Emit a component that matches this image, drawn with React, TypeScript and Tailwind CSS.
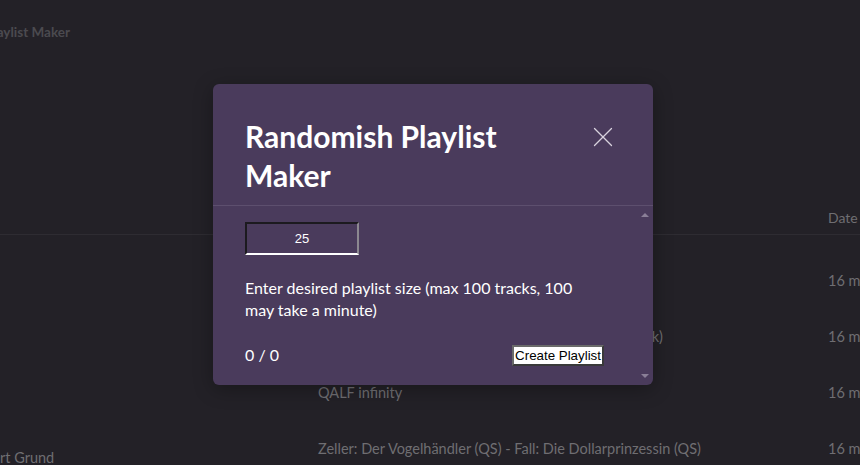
import { X } from "lucide-react";

// rows of the dimmed page behind the modal
const rows = [
  { title: "", date: "16 mi" },
  { title: "Tiefschwarz - Original Mix Remastered (Black Deck)", date: "16 mi" },
  { title: "QALF infinity", date: "16 mi" },
  { title: "Zeller: Der Vogelhändler (QS) - Fall: Die Dollarprinzessin (QS)", date: "16 mi", sub: "rt Grund" },
];

function Background() {
  return (
    <div className="flex h-full w-full flex-col overflow-hidden bg-[#232127] font-['Lato',sans-serif] text-[#6f6e72]">
      <div className="h-[20px] shrink-0" />
      <div className="shrink-0 overflow-hidden">
        <div className="-ml-[85px] whitespace-nowrap text-[13.5px] font-bold leading-[24px] text-[#4b4a4f]">
          Randomish Playlist Maker
        </div>
      </div>
      <div className="h-[156px] shrink-0" />
      <div className="flex h-[35px] shrink-0 items-center border-b border-[#2e2c32] text-[14px]">
        <div className="w-[828px] shrink-0" />
        <div className="whitespace-nowrap">Date</div>
      </div>
      <div className="h-[18px] shrink-0" />
      {rows.map((row, i) => (
        <div key={i} className="relative flex h-[56px] shrink-0 items-center text-[14.5px]">
          <div className="w-[318px] shrink-0" />
          {i === 1 ? (
            <div className="flex w-[345px] shrink-0 justify-end overflow-hidden">
              <span className="whitespace-nowrap">{row.title}</span>
            </div>
          ) : (
            <div className="w-[345px] shrink-0 whitespace-nowrap">{row.title}</div>
          )}
          <div className="w-[165px] shrink-0" />
          <div className="whitespace-nowrap">{row.date}</div>
          {row.sub && (
            <div className="absolute left-0 top-[26px] whitespace-nowrap text-[14.5px] leading-[22px]">{row.sub}</div>
          )}
        </div>
      ))}
    </div>
  );
}

function Modal() {
  return (
    <div className="absolute left-[213px] top-[84px] flex h-[301px] w-[440px] flex-col rounded-[6px] bg-[#4a3b5c] font-['Lato',sans-serif] text-white shadow-[0_4px_20px_rgba(0,0,0,0.3)]">
      <div className="flex items-start justify-between border-b border-[#5d4f6e] pl-[32px] pr-[33px] pt-[33px] pb-[10px]">
        <h1 className="w-[300px] text-[30px] font-bold leading-[39px]">
          Randomish Playlist Maker
        </h1>
        <button className="mt-[3px] text-[#d8d2de]">
          <X size={34} strokeWidth={0.9} />
        </button>
      </div>
      <div className="flex min-h-0 flex-1">
        <div className="flex flex-1 flex-col pl-[32px] pr-[34px] pt-[16px]">
          <input
            defaultValue="25"
            className="h-[33px] w-[114px] border-2 border-b-white border-l-[#1c1a1f] border-r-[#8c8890] border-t-[#1c1a1f] bg-transparent text-center font-['Liberation_Sans',sans-serif] text-[13px] text-white outline-none"
          />
          <p className="mt-[22px] text-[16px] leading-[22px]">
            Enter desired playlist size (max 100 tracks, 100 may take a minute)
          </p>
          <div className="mt-[22px] flex items-center justify-between">
            <span className="text-[16px]">0 / 0</span>
            <button className="h-[21px] border-2 border-b-[#3a3a3a] border-l-[#6a6a6a] border-r-[#3a3a3a] border-t-[#6a6a6a] bg-white px-[1px] font-['Liberation_Sans',sans-serif] text-[13.33px] leading-[15px] text-black">
              Create Playlist
            </button>
          </div>
        </div>
        <div className="flex w-[15px] flex-col items-center justify-between py-[7px] pr-[1px]">
          <div className="h-0 w-0 border-x-[4px] border-b-[4px] border-x-transparent border-b-[#8a7f97]" />
          <div className="h-0 w-0 border-x-[4px] border-t-[4px] border-x-transparent border-t-[#8a7f97]" />
        </div>
      </div>
    </div>
  );
}

export default function App() {
  return (
    <div className="relative h-[465px] w-[860px] overflow-hidden">
      <Background />
      <Modal />
    </div>
  );
}
